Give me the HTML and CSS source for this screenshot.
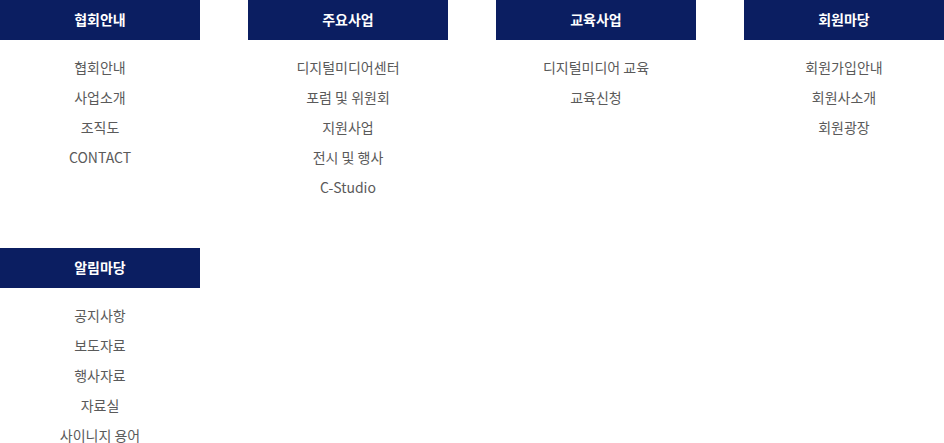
FILE: index.html
```html
<!DOCTYPE html>
<html>
<head>
    <title>사이트맵</title>
    <meta name="viewport" content="width=device-width, initial-scale=1.0">
    <link rel="stylesheet" href="styles.css">
</head>
<body>

    <div id="sitemap">
        <div class="menu">
            <h3>협회안내</h3>
            <ul>
                <li>협회안내</li>
                <li>사업소개</li>
                <li>조직도</li>
                <li>CONTACT</li>
            </ul>
        </div>
        <div class="menu">
            <h3>주요사업</h3>
            <ul>
                <li>디지털미디어센터</li>
                <li>포럼 및 위원회</li>
                <li>지원사업</li>
                <li>전시 및 행사</li>
                <li>C-Studio</li>
            </ul>
        </div>
        <div class="menu">
            <h3>교육사업</h3>
            <ul>
                <li>디지털미디어 교육</li>
                <li>교육신청</li>
            </ul>
        </div>
        <div class="menu">
            <h3>회원마당</h3>
            <ul>
                <li>회원가입안내</li>
                <li>회원사소개</li>
                <li>회원광장</li>
            </ul>
        </div>
        <div class="menu">
            <h3>알림마당</h3>
            <ul>
                <li>공지사항</li>
                <li>보도자료</li>
                <li>행사자료</li>
                <li>자료실</li>
                <li>사이니지 용어</li>
            </ul>
        </div>
    </div>

</body>
</html>
```

FILE: styles.css
```css
* {
    margin: 0;
    padding: 0;
    box-sizing: border-box;
}

body {
    background: #fff;
    font-family: "Noto Sans CJK KR", "Noto Sans", sans-serif;
    overflow: hidden;
}

#sitemap {
    display: grid;
    grid-template-columns: repeat(4, 200px);
    column-gap: 48px;
    row-gap: 30px;
    align-items: start;
}

.menu h3 {
    height: 40px;
    line-height: 39px;
    background: #0b1e61;
    color: #fff;
    font-size: 14px;
    font-weight: bold;
    text-align: center;
}

.menu ul {
    list-style: none;
    padding: 12px 0 16px;
    min-height: 178px;
}

.menu li {
    height: 30px;
    line-height: 30px;
    font-size: 14px;
    color: #5a5a5a;
    text-align: center;
}
```
